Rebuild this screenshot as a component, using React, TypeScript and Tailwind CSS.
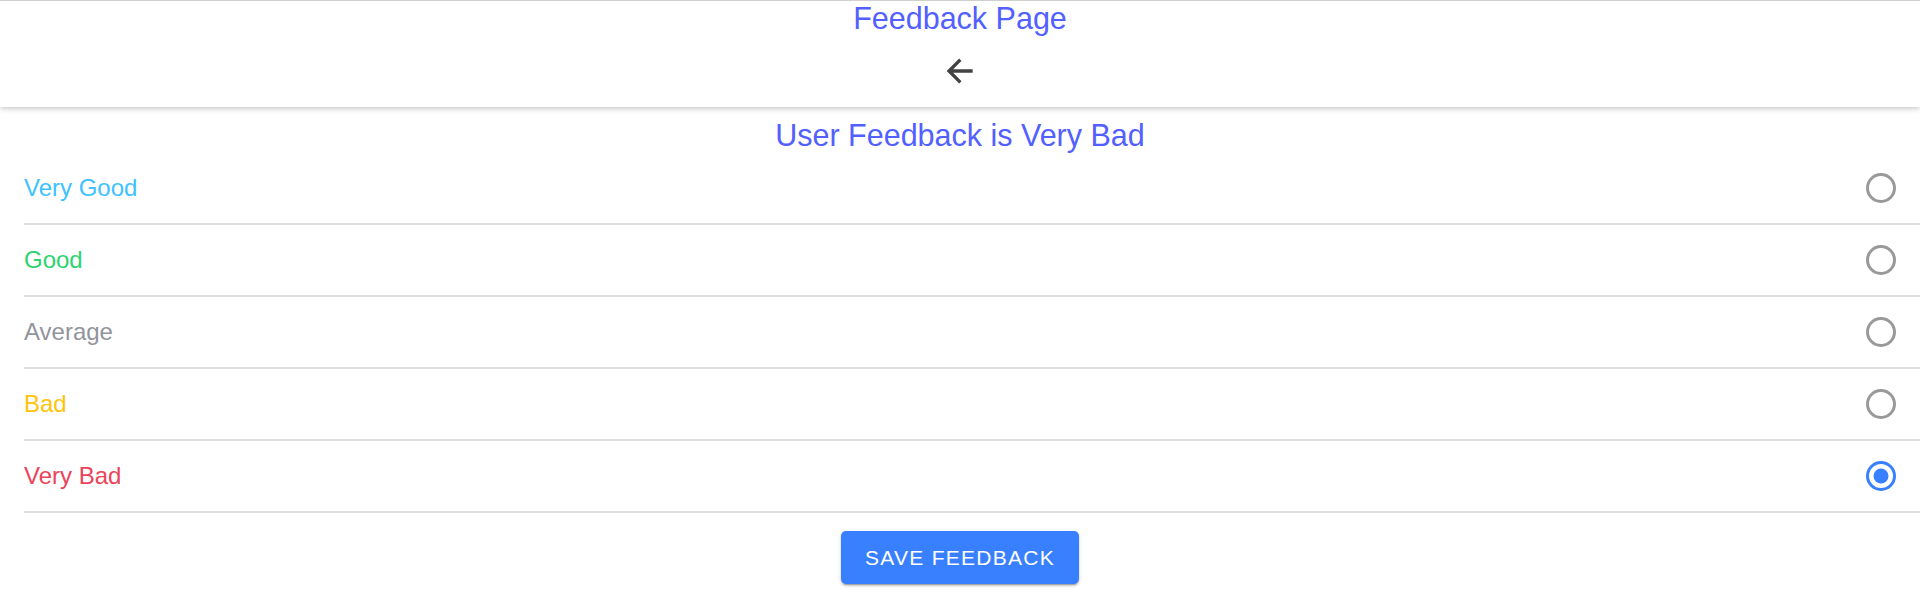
const options = [
  { label: "Very Good", color: "text-[#3dc2ff]" },
  { label: "Good", color: "text-[#2dd36f]" },
  { label: "Average", color: "text-[#92949c]" },
  { label: "Bad", color: "text-[#ffc409]" },
  { label: "Very Bad", color: "text-[#eb445a]" },
];

function Radio({ checked }: { checked: boolean }) {
  return (
    <svg width="36" height="36" viewBox="0 0 36 36">
      <circle
        cx="18"
        cy="18"
        r="13.5"
        fill="none"
        stroke={checked ? "#3880ff" : "#999999"}
        strokeWidth="3"
      />
      {checked && <circle cx="18" cy="18" r="7.5" fill="#3880ff" />}
    </svg>
  );
}

export default function App() {
  const selected = "Very Bad";

  return (
    <div className="min-h-[604px] bg-white font-['Liberation_Sans',Arial,sans-serif]">
      {/* Header */}
      <header className="relative z-10 flex h-[107px] flex-col items-center border-t border-[#d0d0d0] bg-white pt-[2px] shadow-[0_3px_6px_-1px_rgba(0,0,0,0.14),0_2px_3px_0_rgba(0,0,0,0.08)]">
        <h1 className="text-[30.5px] leading-[30px] text-[#5260ff]">Feedback Page</h1>
        <button className="mt-[20px] text-[#424242]">
          <svg width="36" height="36" viewBox="0 0 512 512">
            <path
              fill="none"
              stroke="currentColor"
              strokeLinecap="square"
              strokeMiterlimit="10"
              strokeWidth="48"
              d="M244 400L100 256l144-144M120 256h292"
            />
          </svg>
        </button>
      </header>

      {/* Title */}
      <h2 className="mt-[11px] text-center text-[30.5px] leading-[35px] text-[#5260ff]">
        User Feedback is {selected}
      </h2>

      {/* Options */}
      <div className="ml-6">
        {options.map((o) => (
          <div
            key={o.label}
            className="flex h-[72px] items-center justify-between border-b-2 border-[#dedede] pr-[21px]"
          >
            <span className={`text-[24px] ${o.color}`}>{o.label}</span>
            <Radio checked={o.label === selected} />
          </div>
        ))}
      </div>

      {/* Save */}
      <div className="mt-[18px] flex justify-center">
        <button className="h-[53px] w-[238px] rounded-[5px] bg-[#3880ff] text-[21px] tracking-[0.06em] text-white shadow-[0_3px_1px_-2px_rgba(0,0,0,0.2),0_2px_2px_0_rgba(0,0,0,0.14),0_1px_5px_0_rgba(0,0,0,0.12)]">
          SAVE FEEDBACK
        </button>
      </div>
    </div>
  );
}
